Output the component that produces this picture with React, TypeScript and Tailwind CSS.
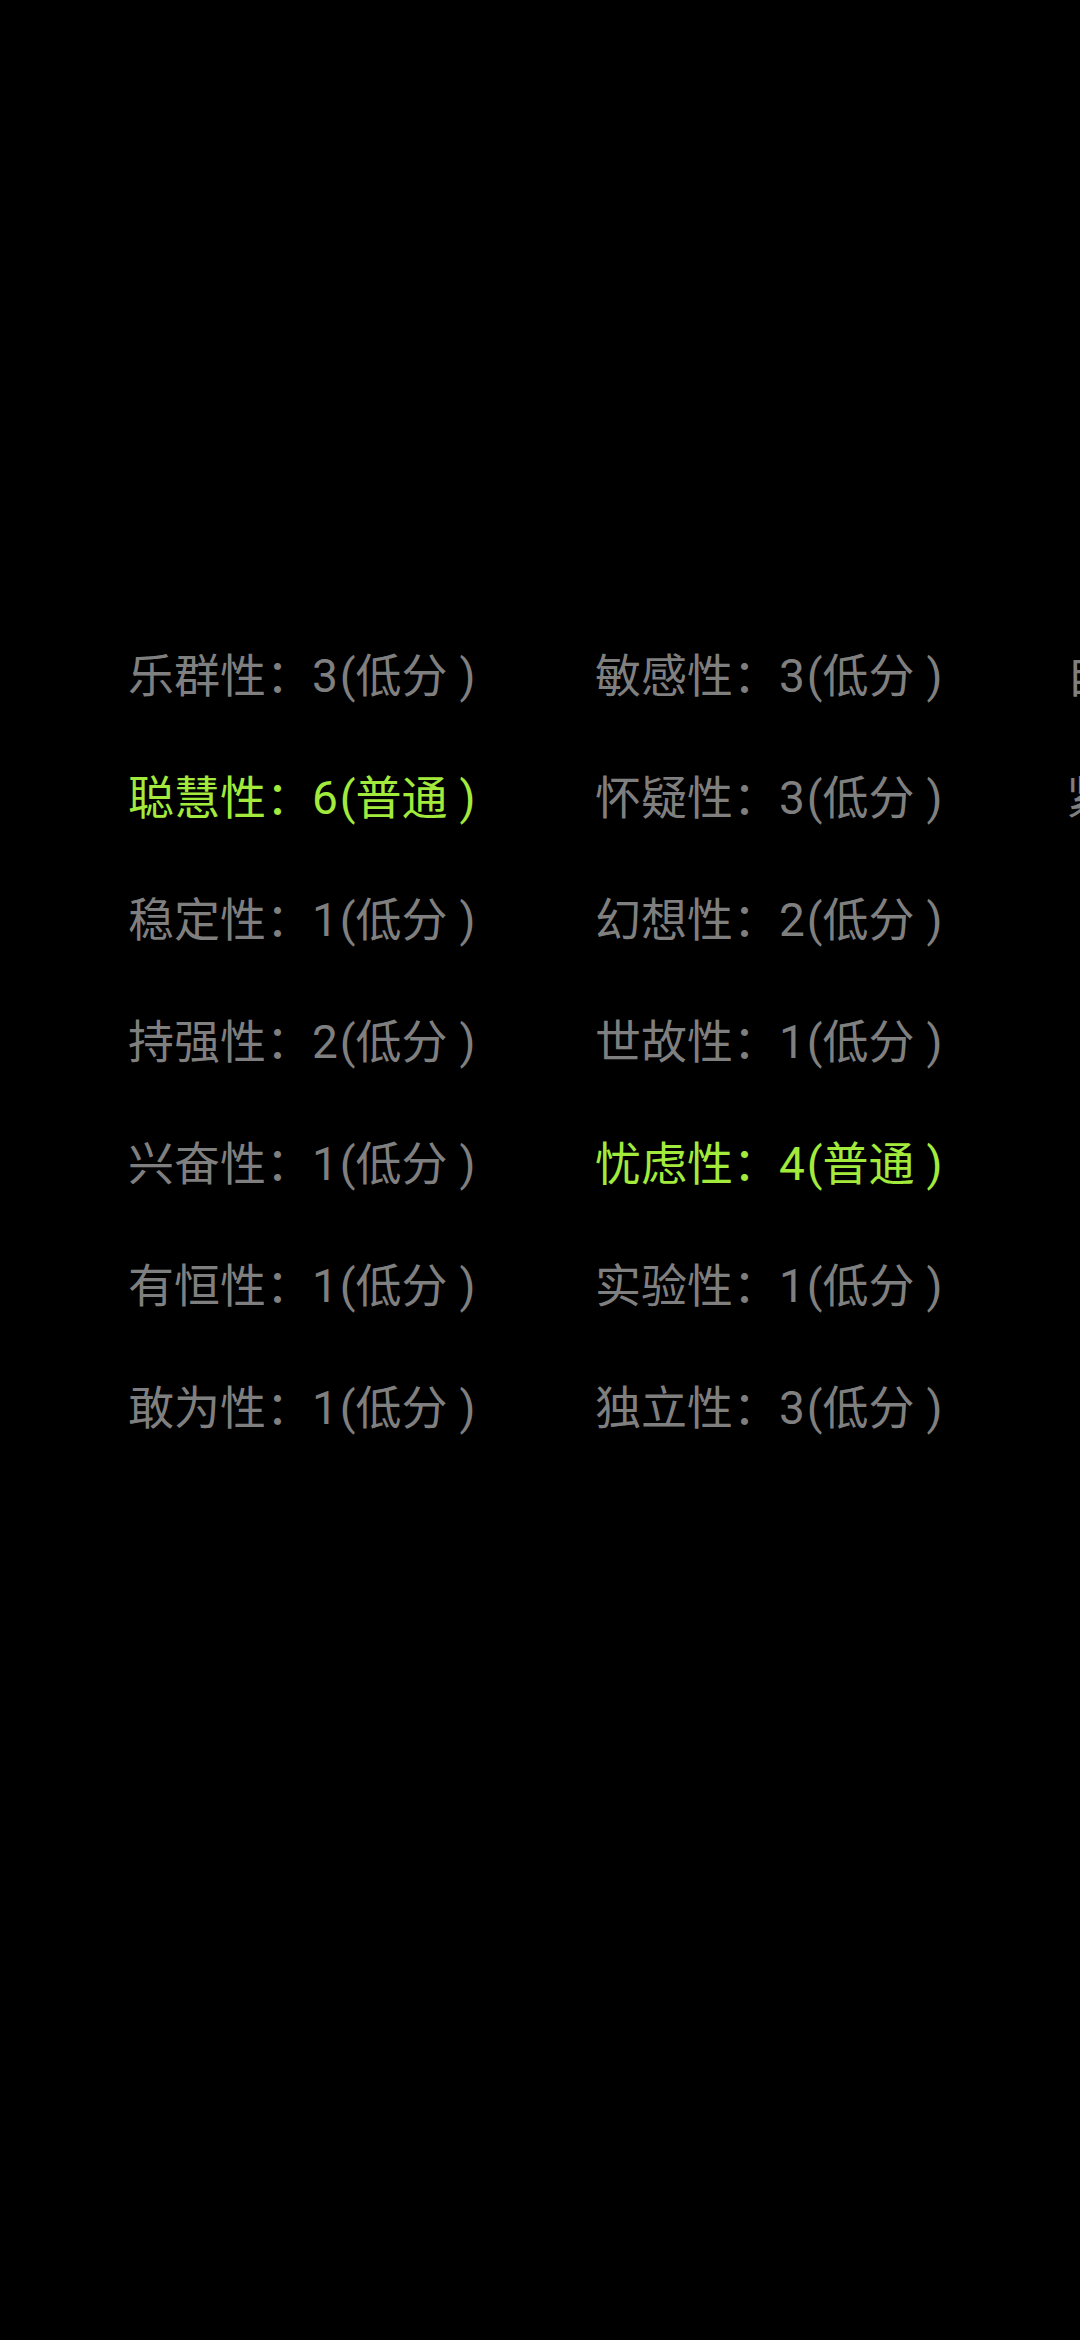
const columns = [
  {
    width: 'w-[467px]',
    items: [
      { name: '乐群性', score: 3, level: '低分' },
      { name: '聪慧性', score: 6, level: '普通' },
      { name: '稳定性', score: 1, level: '低分' },
      { name: '持强性', score: 2, level: '低分' },
      { name: '兴奋性', score: 1, level: '低分' },
      { name: '有恒性', score: 1, level: '低分' },
      { name: '敢为性', score: 1, level: '低分' },
    ],
  },
  {
    width: 'w-[471px]',
    items: [
      { name: '敏感性', score: 3, level: '低分' },
      { name: '怀疑性', score: 3, level: '低分' },
      { name: '幻想性', score: 2, level: '低分' },
      { name: '世故性', score: 1, level: '低分' },
      { name: '忧虑性', score: 4, level: '普通' },
      { name: '实验性', score: 1, level: '低分' },
      { name: '独立性', score: 3, level: '低分' },
    ],
  },
  {
    width: 'w-[480px]',
    items: [
      { name: '自律性', score: 3, level: '低分' },
      { name: '紧张性', score: 3, level: '低分' },
    ],
  },
];

export default function App() {
  return (
    <div
      className="w-[1080px] h-[2340px] bg-black overflow-hidden"
      style={{ fontFamily: 'Roboto, "Noto Sans CJK SC", sans-serif' }}
    >
      <div className="flex pl-[128px] pt-[615px]">
        {columns.map((col, ci) => (
          <div key={ci} className={`${col.width} shrink-0 flex flex-col`}>
            {col.items.map((it) => (
              <div
                key={it.name}
                className={
                  it.level === '普通'
                    ? 'h-[122px] leading-[122px] text-[46px] whitespace-nowrap text-[#a2ea3c]'
                    : 'h-[122px] leading-[122px] text-[46px] whitespace-nowrap text-[#7f7f7f]'
                }
              >
                {it.name}：{it.score}
                <span className="ml-[2px]">(</span>
                {it.level}
                <span className="ml-[12px]">)</span>
              </div>
            ))}
          </div>
        ))}
      </div>
    </div>
  );
}
